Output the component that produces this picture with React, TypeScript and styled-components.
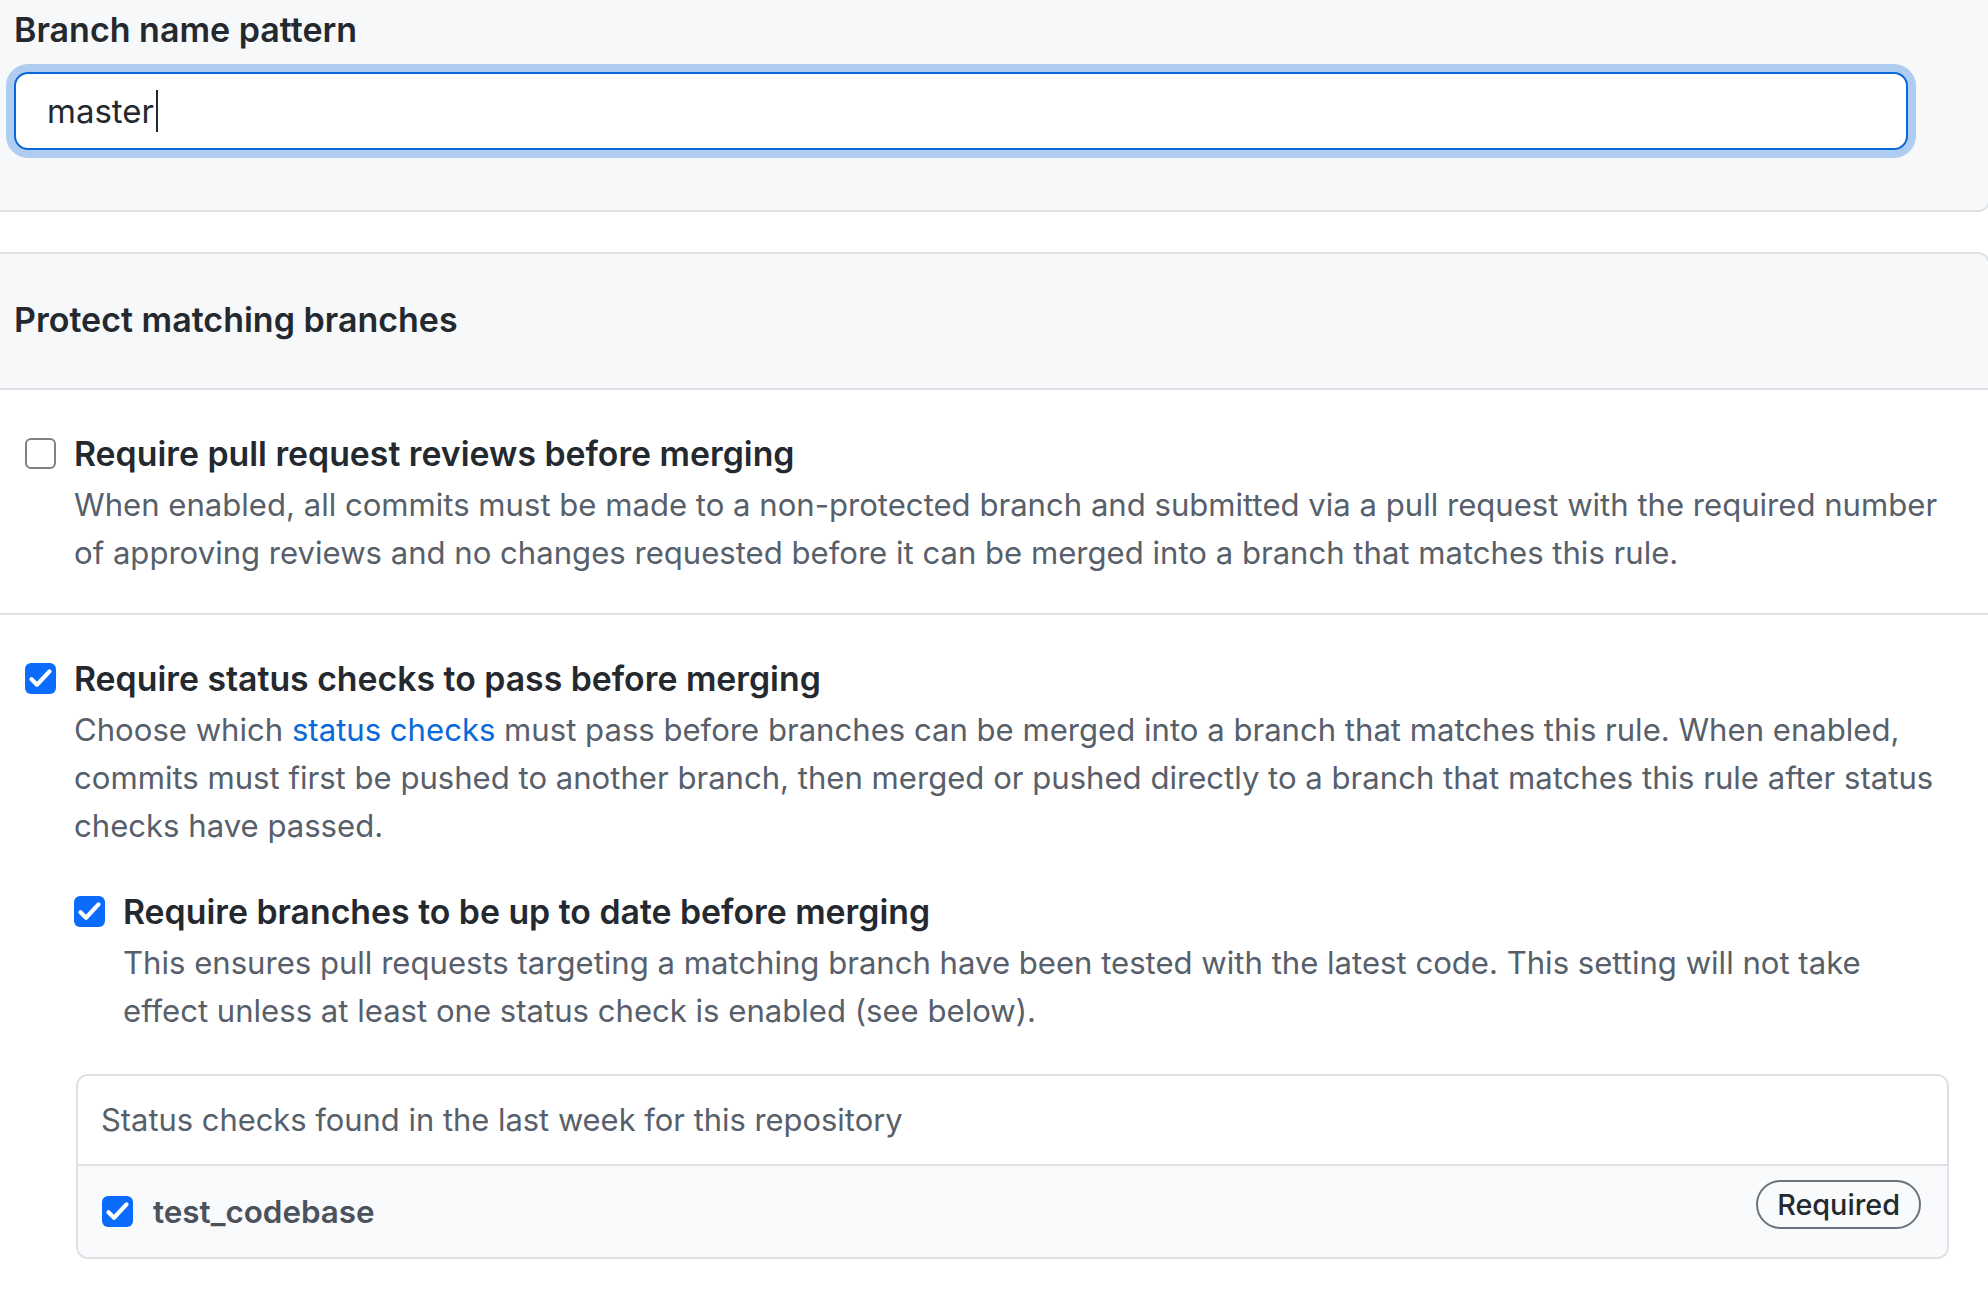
import React from "react";
import styled, { createGlobalStyle } from "styled-components";

const GlobalStyle = createGlobalStyle`
  html, body {
    margin: 0;
    padding: 0;
    background: #ffffff;
    overflow: hidden;
  }
  body {
    font-family: "Inter", "Noto Sans", sans-serif;
    color: #24292f;
  }
`;

const Page = styled.div`
  width: 1990px;
  display: flex;
  flex-direction: column;
`;

const Box = styled.section<{ $cutTop?: boolean }>`
  border: 2px solid #dde1e5;
  border-left: none;
  border-radius: 0 12px 12px 0;
  background: #ffffff;
  margin-top: ${(p) => (p.$cutTop ? "-30px" : "40px")};
  ${(p) => (p.$cutTop ? "" : "border-bottom: none; border-bottom-right-radius: 0;")}
`;

const PatternPanel = styled.div`
  background: #f6f8fa;
  border-radius: 0 10px 10px 0;
  padding: 34px 80px 60px 14px;
  display: flex;
  flex-direction: column;
`;

const Heading = styled.h2`
  margin: 0;
  font-size: 34px;
  line-height: 48px;
  font-weight: 600;
  color: #24292f;
`;

const PatternField = styled.div`
  margin-top: 18px;
  height: 78px;
  box-sizing: border-box;
  border: 2px solid #0969da;
  border-radius: 14px;
  background: #ffffff;
  box-shadow: 0 0 0 8px rgba(9, 105, 218, 0.3);
  padding: 0 31px;
  display: flex;
  align-items: center;
  font-size: 33px;
  color: #24292f;
`;

const Caret = styled.span`
  display: inline-block;
  width: 2px;
  height: 42px;
  background: #24292f;
  margin-left: 2px;
`;

const BoxHeader = styled.div`
  background: #f6f8fa;
  border-top-right-radius: 10px;
  border-bottom: 2px solid #dde1e5;
  padding: 42px 14px 44px;
`;

const RuleRow = styled.div<{ $nested?: boolean }>`
  display: flex;
  align-items: flex-start;
  gap: 18px;
  padding: ${(p) => (p.$nested ? "0" : "40px 41px 36px 25px")};
  margin-top: ${(p) => (p.$nested ? "38px" : "0")};
  & + & {
    border-top: 2px solid #dde1e5;
  }
`;

const RuleBody = styled.div`
  flex: 1;
  min-width: 0;
  display: flex;
  flex-direction: column;
`;

const RuleTitle = styled.div`
  font-size: 33.8px;
  line-height: 48px;
  font-weight: 600;
  color: #24292f;
`;

const RuleDesc = styled.div`
  margin: 3px 0 0;
  font-size: 31.1px;
  line-height: 48px;
  color: #57606a;
`;

const Link = styled.span`
  color: #0969da;
`;

const CheckBox = styled.span<{ $checked?: boolean; $offset?: number }>`
  flex: none;
  width: 31px;
  height: 31px;
  box-sizing: border-box;
  margin-top: ${(p) => p.$offset ?? 8}px;
  border-radius: 6px;
  border: ${(p) => (p.$checked ? "none" : "2px solid #808080")};
  background: ${(p) => (p.$checked ? "#0b6cfb" : "#ffffff")};
  display: flex;
  align-items: center;
  justify-content: center;
`;

const Check: React.FC<{ checked?: boolean; offset?: number }> = ({ checked, offset }) => (
  <CheckBox $checked={checked} $offset={offset}>
    {checked && (
      <svg width="31" height="31" viewBox="0 0 31 31" aria-hidden="true">
        <path d="M6.5 16.2 L12 21.8 L24.5 8.4" fill="none" stroke="#ffffff" strokeWidth="4.2" strokeLinecap="round" strokeLinejoin="round" />
      </svg>
    )}
  </CheckBox>
);

const ChecksBox = styled.div`
  margin: 39px -2px 0 2px;
  border: 2px solid #dde1e5;
  border-radius: 12px;
  overflow: hidden;
`;

const ChecksHeader = styled.div`
  padding: 20px 23px;
  font-size: 30.9px;
  line-height: 48px;
  color: #57606a;
  background: #ffffff;
  border-bottom: 2px solid #dde1e5;
`;

const ChecksRow = styled.div`
  height: 91px;
  display: flex;
  align-items: center;
  padding: 0 26px 0 24px;
  background: #f9fafb;
`;

const CheckLabel = styled.label`
  display: flex;
  align-items: center;
  gap: 20px;
  font-size: 31.4px;
  line-height: 48px;
  font-weight: 600;
  color: #4a525b;
`;

const Badge = styled.span`
  margin-left: auto;
  align-self: flex-start;
  margin-top: 14px;
  height: 49px;
  box-sizing: border-box;
  padding: 0 19px;
  border: 2px solid #6a737d;
  border-radius: 999px;
  font-size: 28.8px;
  line-height: 45px;
  font-weight: 500;
  color: #24292f;
`;

export default function App() {
  return (
    <Page>
      <GlobalStyle />
      <Box $cutTop>
        <PatternPanel>
          <Heading>Branch name pattern</Heading>
          <PatternField>
            master
            <Caret />
          </PatternField>
        </PatternPanel>
      </Box>

      <Box>
        <BoxHeader>
          <Heading>Protect matching branches</Heading>
        </BoxHeader>

        <RuleRow>
          <Check />
          <RuleBody>
            <RuleTitle>Require pull request reviews before merging</RuleTitle>
            <RuleDesc>
              When enabled, all commits must be made to a non-protected branch and submitted via a pull request with the
              required number of approving reviews and no changes requested before it can be merged into a branch that
              matches this rule.
            </RuleDesc>
          </RuleBody>
        </RuleRow>

        <RuleRow>
          <Check checked />
          <RuleBody>
            <RuleTitle>Require status checks to pass before merging</RuleTitle>
            <RuleDesc>
              Choose which <Link>status checks</Link> must pass before branches can be merged into a branch that
              matches this rule. When enabled, commits must first be pushed to another branch, then merged or pushed
              directly to a branch that matches this rule after status checks have passed.
            </RuleDesc>

            <RuleRow $nested>
              <Check checked />
              <RuleBody>
                <RuleTitle>Require branches to be up to date before merging</RuleTitle>
                <RuleDesc>
                  This ensures pull requests targeting a matching branch have been tested with the latest code. This
                  setting will not take effect unless at least one status check is enabled (see below).
                </RuleDesc>
              </RuleBody>
            </RuleRow>

            <ChecksBox>
              <ChecksHeader>Status checks found in the last week for this repository</ChecksHeader>
              <ChecksRow>
                <CheckLabel>
                  <Check checked offset={0} />
                  test_codebase
                </CheckLabel>
                <Badge>Required</Badge>
              </ChecksRow>
            </ChecksBox>
          </RuleBody>
        </RuleRow>
      </Box>
    </Page>
  );
}
